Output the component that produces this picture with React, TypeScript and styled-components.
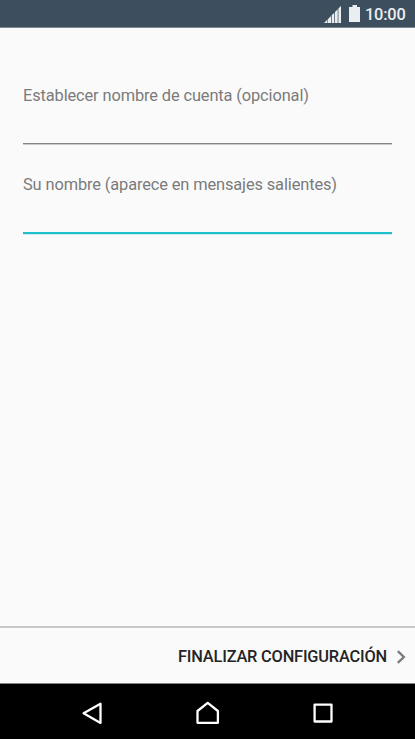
import React from "react";
import styled, { createGlobalStyle } from "styled-components";

const GlobalStyle = createGlobalStyle`
  * { box-sizing: border-box; }
  body { margin: 0; background: #fafafa; font-family: Roboto, sans-serif; overflow: hidden; }
`;

const Screen = styled.div`
  display: flex;
  flex-direction: column;
  width: 415px;
  height: 739px;
  background: #fafafa;
`;

const StatusBar = styled.header`
  display: flex;
  justify-content: flex-end;
  height: 28px;
  padding-right: 9px;
  background: #3d4f5e;
  border-bottom: 1px solid #7d8993;
`;

const StatusIcons = styled.svg`
  width: 41px;
  height: 27px;
  fill: #ebeef0;
`;

const Clock = styled.time`
  width: 41px;
  font-size: 16.4px;
  font-weight: 500;
  line-height: 29px;
  letter-spacing: -0.2px;
  color: #ebeef0;
  white-space: nowrap;
`;

const Form = styled.main`
  flex: 1;
  padding: 58px 23px 0;
`;

const Field = styled.label`
  display: block;
  height: 89px;
`;

const Caption = styled.span`
  display: block;
  height: 20px;
  font-size: 16.4px;
  line-height: 20px;
  letter-spacing: -0.12px;
  color: #7b7b7b;
  white-space: nowrap;
`;

const Input = styled.input<{ $active?: boolean }>`
  display: block;
  width: 100%;
  height: ${(p) => (p.$active ? "39px" : "38px")};
  padding: 0;
  border: 0;
  border-bottom: ${(p) => (p.$active ? "2px solid #1fbfca" : "1px solid #858585")};
  box-shadow: 0 1px 0 ${(p) => (p.$active ? "#c9eef1" : "#cccccc")};
  outline: 0;
  background: transparent;
`;

const Footer = styled.footer`
  display: flex;
  align-items: center;
  justify-content: flex-end;
  height: 58px;
  padding: 2px 9px 0 0;
  border-top: 2px solid #c8c8c8;
  border-bottom: 1px solid #858585;
`;

const FinishButton = styled.button`
  display: flex;
  align-items: center;
  gap: 9px;
  padding: 0;
  border: 0;
  background: none;
  font: 500 16.4px/20px Roboto, sans-serif;
  letter-spacing: -0.2px;
  color: #242424;
  white-space: nowrap;
`;

const Chevron = styled.svg`
  width: 10px;
  height: 16px;
  fill: none;
  stroke: #7c7c7c;
  stroke-width: 2.4;
`;

const NavBar = styled.nav`
  display: flex;
  justify-content: center;
  gap: 75px;
  height: 55px;
  background: #000;
`;

const NavButton = styled.button`
  width: 41px;
  height: 55px;
  padding: 0;
  border: 0;
  background: none;
`;

const NavIcon = styled.svg`
  display: block;
  width: 41px;
  height: 55px;
  fill: none;
  stroke: #fff;
  stroke-width: 2.3;
  stroke-linejoin: round;
`;

export default function App() {
  return (
    <Screen>
      <GlobalStyle />
      <StatusBar>
        <StatusIcons viewBox="0 0 41 27">
          <path d="M0 23L3 20V23ZM3.6 23V19.4L7 16V23ZM7.7 23V15.3L10.3 12.7V23ZM11 23V12L13.7 9.3V23ZM14.4 23V8.6L17 6V23Z" />
          <path d="M25 7H28.5V5H33V7H36V22H25Z" />
        </StatusIcons>
        <Clock>10:00</Clock>
      </StatusBar>
      <Form>
        <Field>
          <Caption>Establecer nombre de cuenta (opcional)</Caption>
          <Input />
        </Field>
        <Field>
          <Caption>Su nombre (aparece en mensajes salientes)</Caption>
          <Input $active />
        </Field>
      </Form>
      <Footer>
        <FinishButton>
          FINALIZAR CONFIGURACIÓN
          <Chevron viewBox="0 0 10 16">
            <path d="M1.8 2.2L7.8 8L1.8 13.8" />
          </Chevron>
        </FinishButton>
      </Footer>
      <NavBar>
        <NavButton aria-label="Atrás">
          <NavIcon viewBox="0 0 41 55"><path d="M12.6 29.3L29.5 19.8V38.9Z" /></NavIcon>
        </NavButton>
        <NavButton aria-label="Inicio">
          <NavIcon viewBox="0 0 41 55"><path d="M10.5 27L20.7 18.9L30.9 27V38.8H10.5Z" /></NavIcon>
        </NavButton>
        <NavButton aria-label="Recientes">
          <NavIcon viewBox="0 0 41 55"><path d="M11.6 20.6H28.5V37.5H11.6Z" /></NavIcon>
        </NavButton>
      </NavBar>
    </Screen>
  );
}
